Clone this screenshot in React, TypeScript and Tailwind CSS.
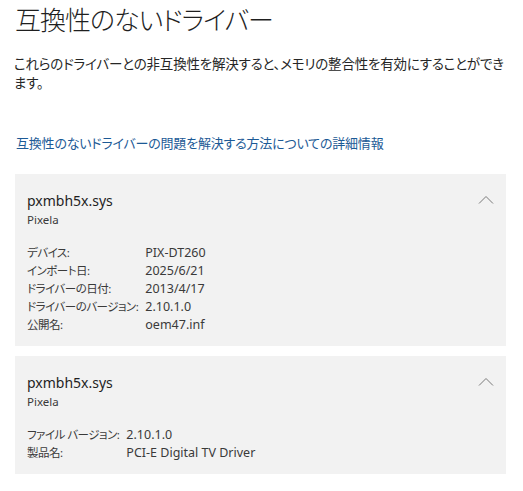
const font = "font-['Noto_Sans','Noto_Sans_CJK_JP',sans-serif] [font-feature-settings:'palt']";

type Row = { label: string; value: string };

const Chevron = () => (
  <svg width="16" height="10" viewBox="0 0 16 10" className="mt-[4px] mr-[12px]">
    <path d="M1 8.5 L8 1.5 L15 8.5" fill="none" stroke="#7a7a7a" strokeWidth="1" />
  </svg>
);

const DriverCard = ({ file, vendor, rows }: { file: string; vendor: string; rows: Row[] }) => {
  return (
    <div className="bg-[#f2f2f2] pl-[12px] pt-[17px] pb-[12px] flex justify-between">
      <div>
        <div className="text-[14px] leading-[20px] text-[#1f1f1f]">{file}</div>
        <div className="text-[11.5px] leading-[18px] text-[#3a3a3a]">{vendor}</div>
        <div className="mt-[15px] grid grid-cols-[auto_1fr] gap-x-[7px] leading-[18px] text-[#3a3a3a]">
          {rows.map((r) => (
            <div key={r.label} className="contents">
              <span className="text-[11.5px] tracking-[-0.5px]">{r.label}</span>
              <span className="text-[12.5px]">{r.value}</span>
            </div>
          ))}
        </div>
      </div>
      <Chevron />
    </div>
  );
};

const App = () => {
  return (
    <div className={`${font} bg-white w-[523px] h-[491px] pl-[14px] pr-[8px] text-[#1f1f1f]`}>
      <h1 className="text-[26px] leading-[36px] font-light tracking-[-1px] pt-[2px] ml-[1px]">互換性のないドライバー</h1>
      <p className="mt-[17px] text-[13.5px] tracking-[-0.2px] leading-[19px] text-[#262626]">
        これらのドライバーとの非互換性を解決すると、メモリの整合性を有効にすることができます。
      </p>
      <a className="block mt-[40px] ml-[2px] text-[13px] tracking-[-0.2px] leading-[20px] text-[#1c5a96]">
        互換性のないドライバーの問題を解決する方法についての詳細情報
      </a>
      <div className="mt-[21px] ml-[1px] mr-[9px] flex flex-col gap-[10px]">
        <DriverCard
          file="pxmbh5x.sys"
          vendor="Pixela"
          rows={[
            { label: "デバイス:", value: "PIX-DT260" },
            { label: "インポート日:", value: "2025/6/21" },
            { label: "ドライバーの日付:", value: "2013/4/17" },
            { label: "ドライバーのバージョン:", value: "2.10.1.0" },
            { label: "公開名:", value: "oem47.inf" },
          ]}
        />
        <DriverCard
          file="pxmbh5x.sys"
          vendor="Pixela"
          rows={[
            { label: "ファイル バージョン:", value: "2.10.1.0" },
            { label: "製品名:", value: "PCI-E Digital TV Driver" },
          ]}
        />
      </div>
    </div>
  );
};

export default App;
